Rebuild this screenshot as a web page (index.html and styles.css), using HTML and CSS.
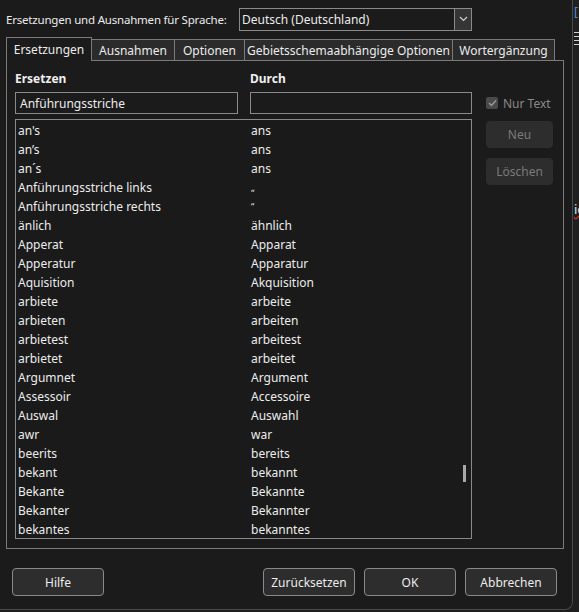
FILE: index.html
```html
<!DOCTYPE html>
<html lang="de">
<head>
<meta charset="utf-8">
<title>AutoKorrektur</title>
<link rel="stylesheet" href="styles.css">
</head>
<body>
<div class="screen">
  <div class="dialog">
    <div class="langrow">
      <span class="langlabel">Ersetzungen und Ausnahmen für Sprache:</span>
      <div class="select">
        <span class="selval">Deutsch (Deutschland)</span>
        <span class="selbtn"><svg width="9" height="6" viewBox="0 0 9 6"><path d="M1 1 L4.5 4.5 L8 1" fill="none" stroke="#cfcfcf" stroke-width="1.2"/></svg></span>
      </div>
    </div>
    <div class="tabs">
      <div class="tab active t1">Ersetzungen</div>
      <div class="tab t2">Ausnahmen</div>
      <div class="tab t3">Optionen</div>
      <div class="tab t4">Gebietsschemaabhängige Optionen</div>
      <div class="tab t5">Wortergänzung</div>
    </div>
    <div class="panel">
      <div class="grid">
        <div class="collabel">Ersetzen</div>
        <div class="collabel">Durch</div>
        <div></div>
        <div class="input">Anführungsstriche</div>
        <div class="input"></div>
        <label class="check"><span class="box"><svg width="9" height="8" viewBox="0 0 9 8"><path d="M1 4 L3.5 6.5 L8 1.5" fill="none" stroke="#9a9a9a" stroke-width="1.3"/></svg></span><span class="checktext">Nur Text</span></label>
        <div class="list">
          <div class="row"><span>an's</span><span>ans</span></div>
          <div class="row"><span>an’s</span><span>ans</span></div>
          <div class="row"><span>an´s</span><span>ans</span></div>
          <div class="row"><span>Anführungsstriche links</span><span class="q">„</span></div>
          <div class="row"><span>Anführungsstriche rechts</span><span class="q">“</span></div>
          <div class="row"><span>änlich</span><span>ähnlich</span></div>
          <div class="row"><span>Apperat</span><span>Apparat</span></div>
          <div class="row"><span>Apperatur</span><span>Apparatur</span></div>
          <div class="row"><span>Aquisition</span><span>Akquisition</span></div>
          <div class="row"><span>arbiete</span><span>arbeite</span></div>
          <div class="row"><span>arbieten</span><span>arbeiten</span></div>
          <div class="row"><span>arbietest</span><span>arbeitest</span></div>
          <div class="row"><span>arbietet</span><span>arbeitet</span></div>
          <div class="row"><span>Argumnet</span><span>Argument</span></div>
          <div class="row"><span>Assessoir</span><span>Accessoire</span></div>
          <div class="row"><span>Auswal</span><span>Auswahl</span></div>
          <div class="row"><span>awr</span><span>war</span></div>
          <div class="row"><span>beerits</span><span>bereits</span></div>
          <div class="row"><span>bekant</span><span>bekannt</span></div>
          <div class="row"><span>Bekante</span><span>Bekannte</span></div>
          <div class="row"><span>Bekanter</span><span>Bekannter</span></div>
          <div class="row"><span>bekantes</span><span>bekanntes</span></div>
          <div class="thumb"></div>
        </div>
        <div class="sidebtns">
          <button class="btn small" disabled>Neu</button>
          <button class="btn small" disabled>Löschen</button>
        </div>
      </div>
    </div>
    <div class="footer">
      <button class="btn">Hilfe</button>
      <div class="spacer"></div>
      <button class="btn">Zurücksetzen</button>
      <button class="btn">OK</button>
      <button class="btn">Abbrechen</button>
    </div>
  </div>
  <div class="behind">
    <span class="bracket">[</span>
    <span class="lines"><i></i><i></i><i></i><i></i></span>
    <span class="io">io</span>
  </div>
</div>
</body>
</html>
```
FILE: styles.css
```css
* { box-sizing: border-box; }
html, body { margin: 0; padding: 0; }
body {
  background: #1f1f1f;
  font-family: "Noto Sans", "Open Sans", sans-serif;
  font-size: 12px;
  color: #ececec;
  width: 579px;
  height: 612px;
  overflow: hidden;
  white-space: nowrap;
}
.screen { display: flex; width: 579px; height: 612px; }
.dialog {
  width: 573px;
  height: 610px;
  flex: none;
  background: #1b1b1b;
  border-right: 1px solid #4a4a4a;
  border-bottom: 1px solid #4a4a4a;
  border-bottom-right-radius: 8px;
  padding: 8px 0 0 6px;
  display: flex;
  flex-direction: column;
}
.langrow { display: flex; align-items: center; height: 22px; }
.langlabel { width: 233px; font-size: 11.5px; letter-spacing: -0.2px; }
.select {
  width: 233px; height: 23px;
  border: 1px solid #8a8a8a;
  display: flex; align-items: center; justify-content: space-between;
  padding-left: 2px;
}
.selbtn {
  width: 17px; height: 21px;
  background: #353535;
  border-left: 1px solid #8a8a8a;
  display: flex; align-items: center; justify-content: center;
}
.tabs { display: flex; align-items: flex-end; margin-top: 7px; height: 23px; }
.tab {
  height: 21px;
  background: #2b2b2b;
  border: 1px solid #7a7a7a;
  border-bottom: none;
  border-left: none;
  display: flex; align-items: center; justify-content: center;
}
.t1 { width: 86px; }
.t2 { width: 83px; }
.t3 { width: 70px; }
.t4 { width: 208px; }
.t5 { width: 102px; }
.tab.active {
  background: #1b1b1b;
  border-left: 1px solid #7a7a7a;
  position: relative;
  z-index: 1;
  margin-bottom: -1px;
  height: 24px;
}
.panel {
  width: 558px;
  height: 489px;
  border: 1px solid #7a7a7a;
  padding: 9px 0 0 8px;
}
.grid {
  display: grid;
  grid-template-columns: 223px 222px 81px;
  grid-template-rows: 19px 22px 422px;
  column-gap: 12px;
  row-gap: 3px;
}
.grid > .list { margin-top: 2px; }
.collabel { font-weight: bold; color: #f0f0f0; }
.input {
  border: 1px solid #8a8a8a;
  height: 22px;
  padding: 0 4px;
  display: flex; align-items: center;
}
.check { display: flex; align-items: center; margin-left: 2px; color: #8a8a8a; }
.box {
  width: 12px; height: 12px;
  background: #4a4a4a;
  border-radius: 2px;
  display: flex; align-items: center; justify-content: center;
  margin-right: 5px;
}
.list {
  grid-column: 1 / 3;
  border: 1px solid #8a8a8a;
  position: relative;
  padding-top: 1px;
  background: #1a1a1a;
}
.row { display: flex; height: 19px; align-items: center; padding-left: 2px; }
.row span:first-child { width: 233px; }
.row .q { font-size: 9px; }
.thumb {
  position: absolute;
  left: 447px; top: 345px;
  width: 3px; height: 17px;
  background: #a8a8a8;
}
.sidebtns {
  grid-row: 3; grid-column: 3;
  margin-left: 2px;
  display: flex; flex-direction: column; gap: 10px;
  margin-top: 4px;
}
.btn {
  font-family: inherit; font-size: 12px;
  background: #2d2d2d;
  color: #ececec;
  border: 1px solid #8a8a8a;
  border-radius: 4px;
  width: 92px; height: 28px;
  padding: 0;
}
.btn.small {
  width: 67px; height: 27px;
  border-color: #2d2d2d;
  color: #7a7a7a;
}
.footer { display: flex; margin-top: 19px; padding-left: 6px; gap: 9px; width: 551px; }
.spacer { flex: 1; }
.behind { flex: 1; position: relative; background: #1f1f1f; overflow: hidden; }
.bracket { position: absolute; left: 1px; top: 3px; color: #4a90d9; font-size: 12px; }
.lines { position: absolute; left: 1px; top: 32px; display: flex; flex-direction: column; gap: 3px; }
.lines i { display: block; width: 7px; height: 1px; background: #d0d0d0; }
.io { position: absolute; left: 1px; top: 200px; font-size: 13px; color: #e0e0e0; text-decoration: underline wavy #c03030; }
```
